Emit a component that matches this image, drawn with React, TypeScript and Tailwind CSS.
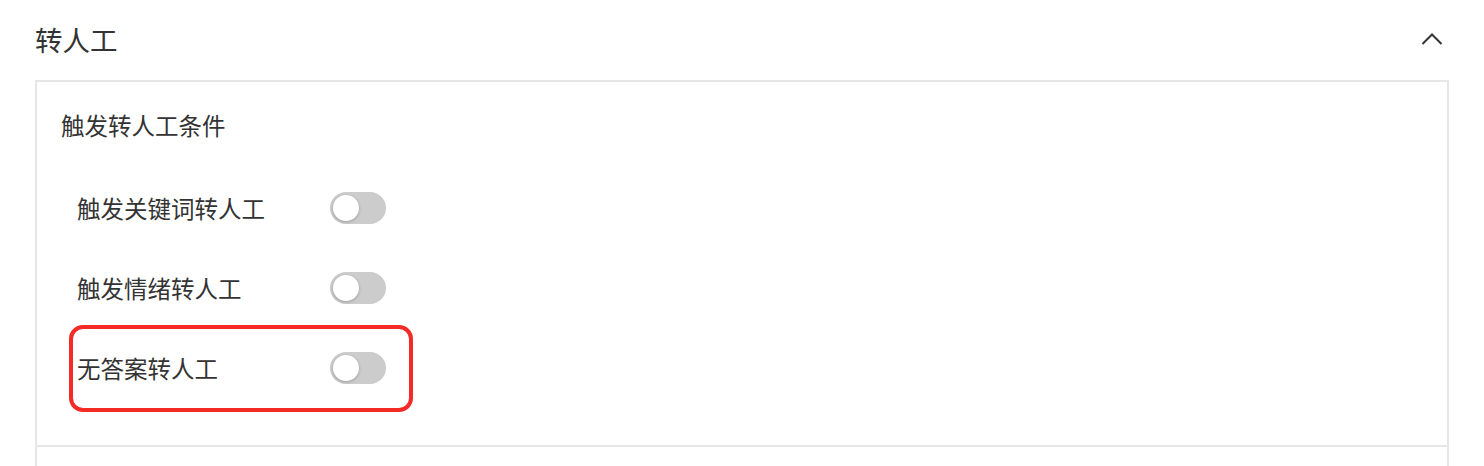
import React from 'react';

const rules = [
    { label: '触发关键词转人工', marked: false },
    { label: '触发情绪转人工', marked: false },
    { label: '无答案转人工', marked: true },
];

const Toggle: React.FC = () => (
    <div className="relative h-[32px] w-[56px] rounded-full bg-[#cccccc]">
        <div className="absolute left-[3px] top-[3px] h-[26px] w-[26px] rounded-full bg-white shadow-[0_1px_3px_rgba(0,0,0,0.25)]" />
    </div>
);

export default function App() {
    return (
        <div
            className="h-[466px] w-[1484px] overflow-hidden bg-white text-[#333333]"
            style={{ fontFamily: '"Noto Sans CJK SC", "Noto Sans", sans-serif' }}
        >
            {/* Header */}
            <div className="flex h-[80px] items-center justify-between pl-[35px] pr-[41px]">
                <h2 className="text-[27.5px] leading-none">转人工</h2>
                <svg width="22" height="14" viewBox="0 0 22 14" fill="none" className="mb-[2px]">
                    <path d="M1.5 12 L11 2.5 L20.5 12" stroke="#333" strokeWidth="2" />
                </svg>
            </div>

            {/* Panel */}
            <div className="mx-[35px] border-x-2 border-t-2 border-[#e6e6e6]">
                <div className="border-b-2 border-[#e6e6e6] pb-[53px]">
                    <div className="pl-[24px] pt-[28px] text-[23.5px] leading-[30px]">触发转人工条件</div>
                    <div className="mt-[44px] flex flex-col gap-[32px] pl-[40px]">
                        {rules.map((rule) => (
                            <div
                                key={rule.label}
                                className={
                                    rule.marked
                                        ? '-mb-[20px] -ml-[8px] -mt-[19px] flex w-[344px] items-center rounded-[14px] border-4 border-[#f42a26] pb-[16px] pl-[4px] pt-[15px]'
                                        : 'flex items-center'
                                }
                            >
                                <span className="w-[253px] text-[23.5px] leading-[48px]">{rule.label}</span>
                                <Toggle />
                            </div>
                        ))}
                    </div>
                </div>
                <div className="h-[40px]" />
            </div>
        </div>
    );
}
